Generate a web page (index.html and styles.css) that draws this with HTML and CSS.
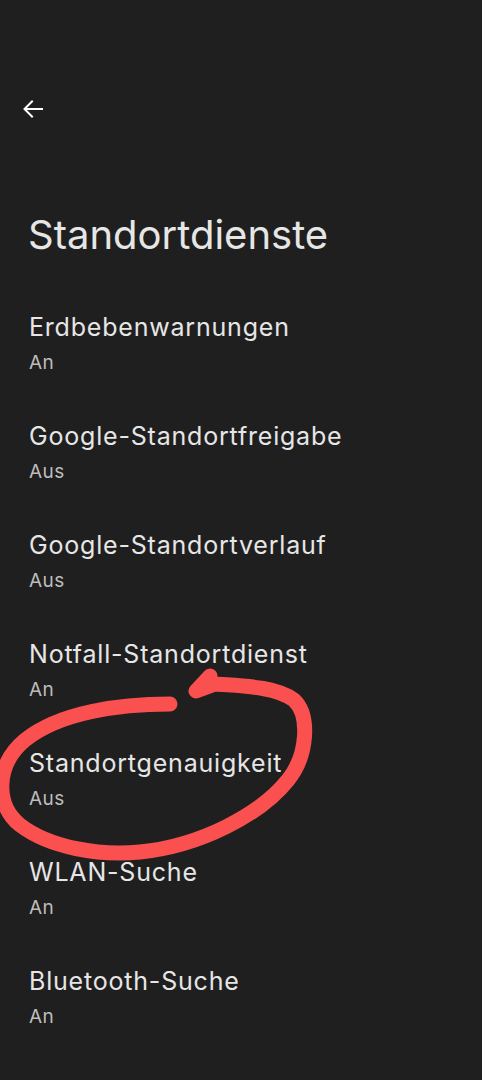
FILE: index.html
```html
<!DOCTYPE html>
<html lang="de">
<head>
<meta charset="utf-8">
<link rel="stylesheet" href="styles.css">
</head>
<body>
<div class="screen">
  <header class="appbar">
    <svg class="back" width="24" height="24" viewBox="0 0 24 24">
      <path d="M21 12H4M11 4.5L3.5 12L11 19.5" fill="none" stroke="#ffffff" stroke-width="2" stroke-linecap="square"/>
    </svg>
  </header>
  <h1 class="title">Standortdienste</h1>
  <ul class="list">
    <li class="item"><div class="item-title">Erdbebenwarnungen</div><div class="item-sub">An</div></li>
    <li class="item"><div class="item-title">Google-Standortfreigabe</div><div class="item-sub">Aus</div></li>
    <li class="item"><div class="item-title">Google-Standortverlauf</div><div class="item-sub">Aus</div></li>
    <li class="item"><div class="item-title">Notfall-Standortdienst</div><div class="item-sub">An</div></li>
    <li class="item"><div class="item-title">Standortgenauigkeit</div><div class="item-sub">Aus</div></li>
    <li class="item"><div class="item-title">WLAN-Suche</div><div class="item-sub">An</div></li>
    <li class="item"><div class="item-title">Bluetooth-Suche</div><div class="item-sub">An</div></li>
  </ul>
  <svg class="scribble" width="482" height="1080" viewBox="0 0 482 1080">
    <path d="M170 704 C120 704 60 712 25 740 C-5 765 -5 805 20 825 C50 848 100 856 140 852 C200 846 260 815 288 780 C308 755 310 715 294 700 C275 686 240 686 215 684 L196 691 L210 676" fill="none" stroke="#fa5050" stroke-width="15" stroke-linecap="round" stroke-linejoin="round"/>
  </svg>
</div>
</body>
</html>
```
FILE: styles.css
```css
html, body {
  margin: 0;
  padding: 0;
  background: #1f1f1f;
}
.screen {
  position: relative;
  width: 482px;
  height: 1080px;
  overflow: hidden;
  font-family: Inter, Roboto, sans-serif;
  color: #e3e3e3;
}
.appbar {
  padding: 97px 0 0 21px;
  height: 24px;
}
.back {
  display: block;
}
.title {
  margin: 89px 0 0 28px;
  font-size: 40px;
  line-height: 50px;
  font-weight: 400;
  color: #e6e6e6;
}
.list {
  list-style: none;
  margin: 29px 0 0;
  padding: 0;
}
.item {
  padding: 22px 28px 23px 29px;
  display: flex;
  flex-direction: column;
  gap: 8px;
}
.item-title {
  font-size: 25px;
  line-height: 32px;
  letter-spacing: 0.8px;
  color: #e6e6e6;
}
.item-sub {
  font-size: 19px;
  line-height: 24px;
  letter-spacing: 0.4px;
  color: #bdbdbd;
}
.scribble {
  position: absolute;
  left: 0;
  top: 0;
  pointer-events: none;
}
```
